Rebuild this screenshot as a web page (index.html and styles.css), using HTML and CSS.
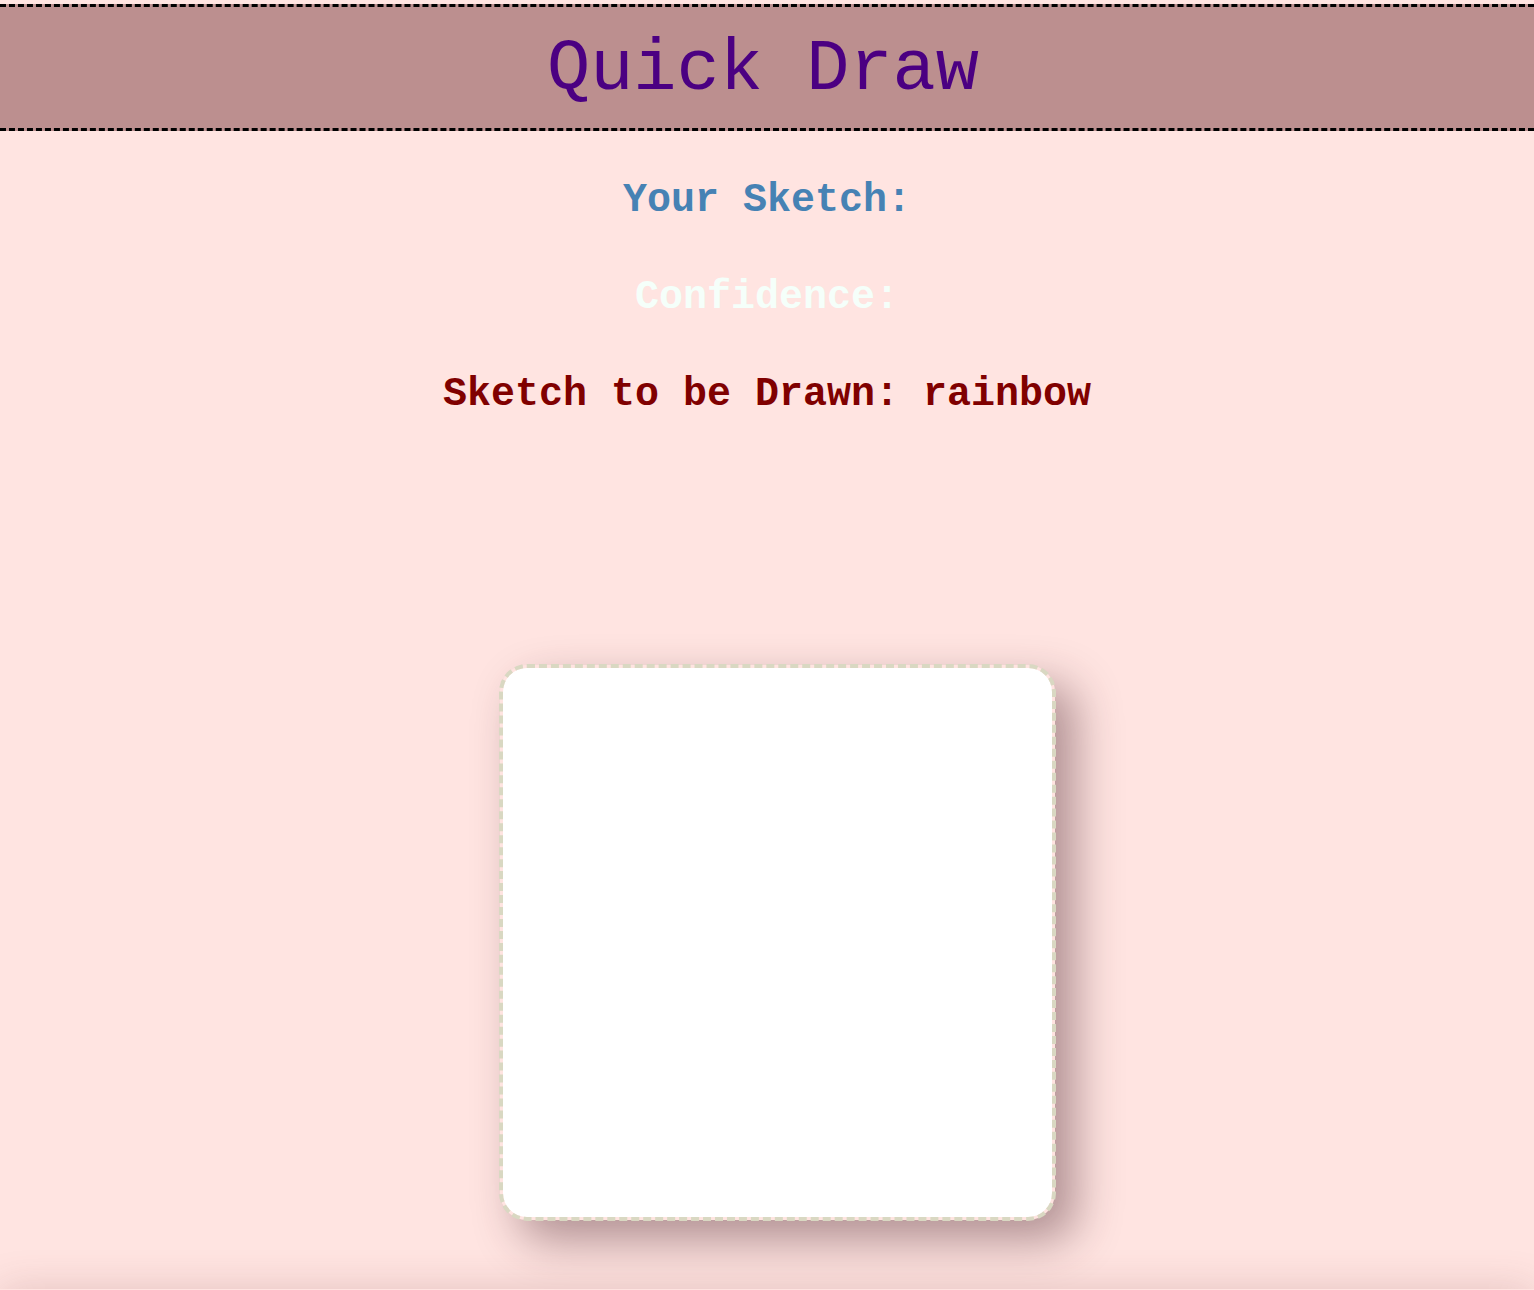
FILE: index.html
```html
<!DOCTYPE html>
<html lang="en">
<head>
<meta charset="utf-8">
<title>Quick Draw</title>
<link rel="stylesheet" href="styles.css">
</head>
<body>
<header class="site-header">
  <h1 class="title">Quick Draw</h1>
</header>
<main class="content">
  <div class="info">
    <p class="line line-sketch">Your Sketch:</p>
    <p class="line line-confidence">Confidence:</p>
    <p class="line line-target">Sketch to be Drawn: rainbow</p>
  </div>
  <div class="board-wrap">
    <div class="board"></div>
  </div>
  <div class="controls"></div>
</main>
</body>
</html>
```
FILE: styles.css
```css
html, body {
  margin: 0;
  padding: 0;
}
body {
  background: #ffe4e1;
  font-family: "Liberation Mono", "Courier New", monospace;
  overflow: hidden;
}
.site-header {
  margin-top: 4px;
  background: #bc8f8f;
  border-top: 3px dashed #000;
  border-bottom: 3px dashed #000;
  padding: 23px 0 17px;
  text-align: center;
}
.title {
  margin: 0 0 0 -8px;
  font-size: 72px;
  font-weight: normal;
  line-height: 81px;
  color: #4b0082;
}
.content {
  display: flex;
  flex-direction: column;
  align-items: center;
}
.info {
  margin-top: 47px;
  display: flex;
  flex-direction: column;
  align-items: center;
  gap: 52px;
}
.line {
  margin: 0;
  font-size: 40px;
  font-weight: bold;
  line-height: 45px;
}
.line-sketch { color: #4682b4; }
.line-confidence { color: #f5fffa; }
.line-target { color: #800000; }
.board-wrap {
  margin-top: 247px;
  display: flex;
  justify-content: center;
  padding-left: 20px;
}
.board {
  width: 549px;
  height: 549px;
  background: #fff;
  background-clip: padding-box;
  border: 4px dashed #d9d8c2;
  border-radius: 28px;
  box-shadow: 20px 20px 45px rgba(70, 30, 40, 0.42);
}
.controls {
  margin-top: 68px;
  width: 100%;
  height: 60px;
  box-shadow: 0 0 40px rgba(120, 60, 60, 0.2);
}
```
